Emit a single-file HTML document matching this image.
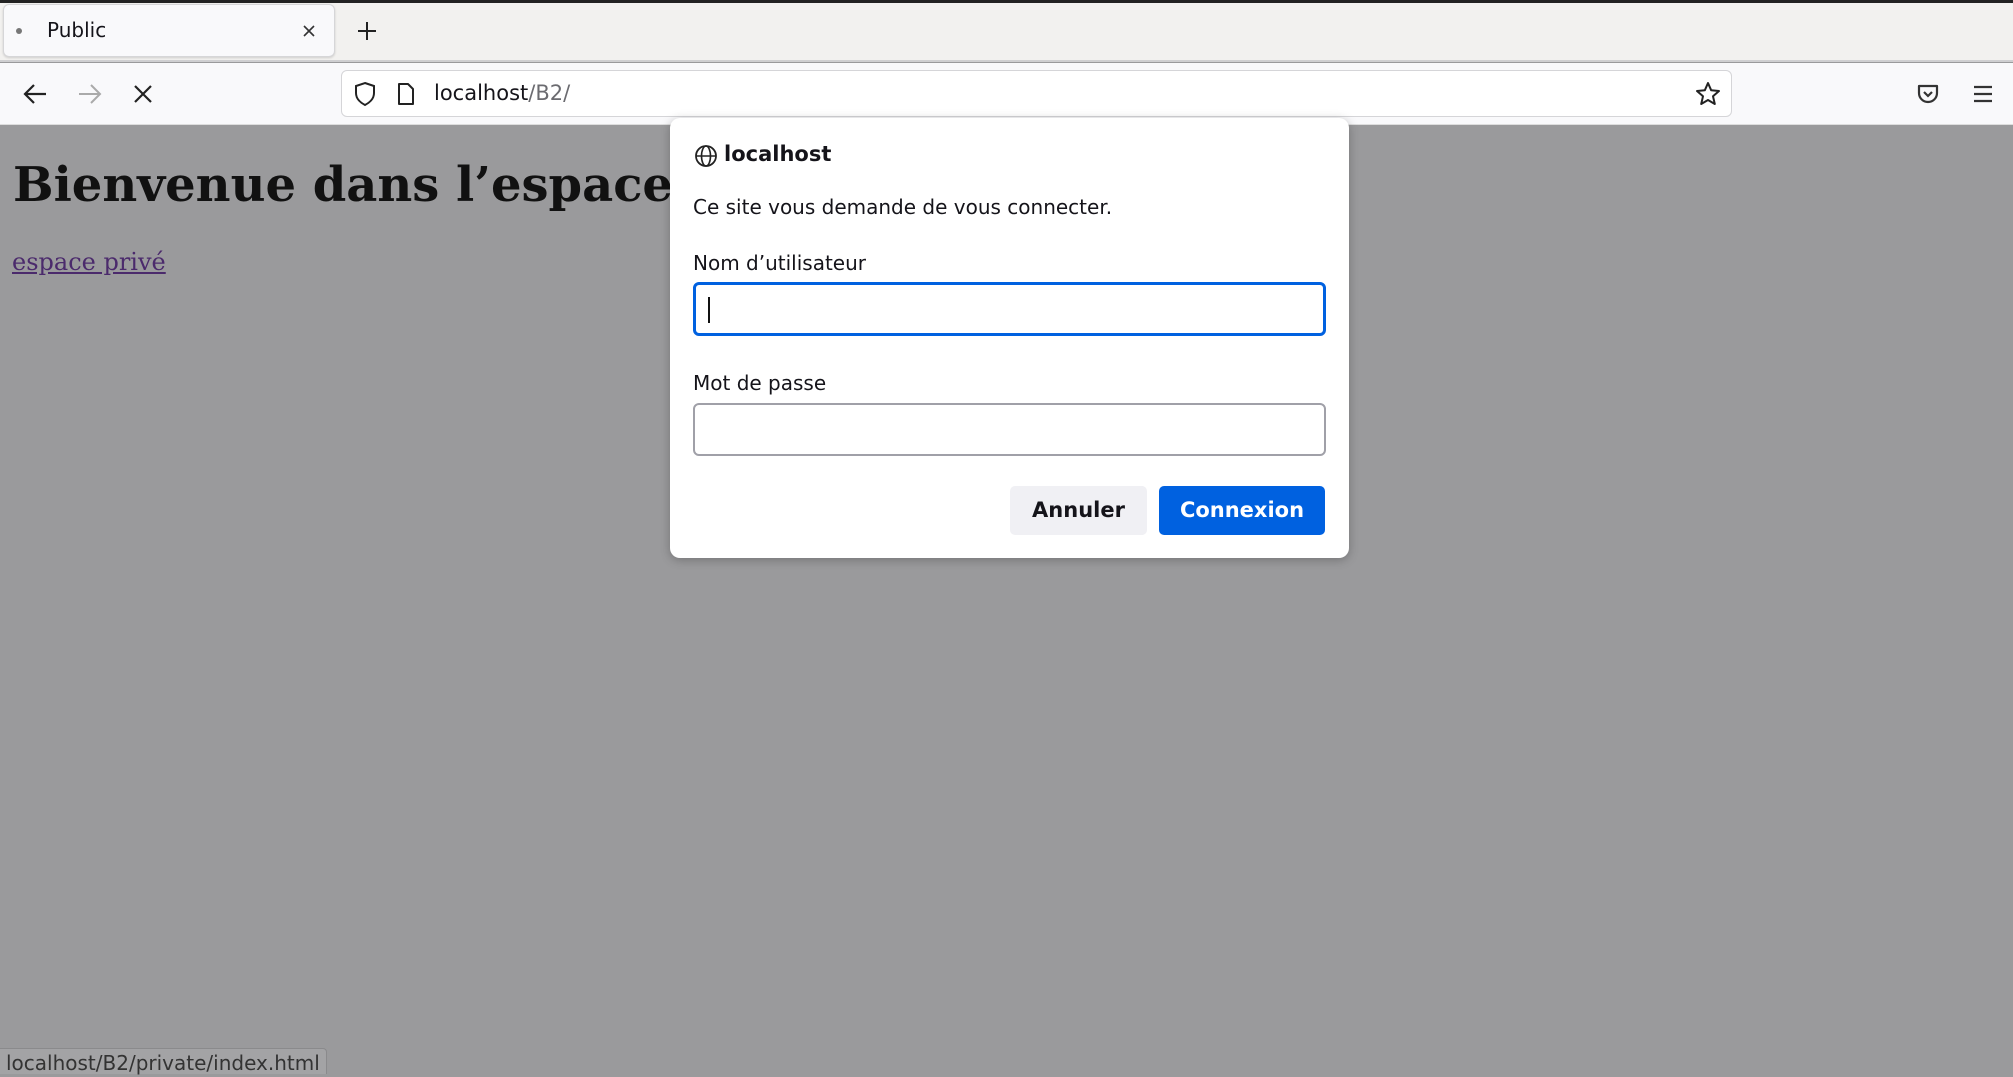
<!DOCTYPE html>
<html><head><meta charset="utf-8"><style>
*{margin:0;padding:0;box-sizing:border-box}
body{width:2013px;height:1074px;overflow:hidden;position:relative;background:#9a9a9c;font-family:"DejaVu Sans","Liberation Sans",sans-serif}
.abs{position:absolute}
#top{left:0;top:0;width:2013px;height:3px;background:#222}
#tabs{left:0;top:3px;width:2013px;height:59px;background:#f2f1ef;border-bottom:2px solid #cfcfd1}
#tab{left:3px;top:4px;width:332px;height:53px;background:#f9f9fb;border:1px solid #d6d6d8;border-radius:6px;box-shadow:0 1px 2px rgba(0,0,0,.15)}
#nav{left:0;top:63px;width:2013px;height:62px;background:#f9f9fb;border-bottom:1px solid #ddd}
#url{left:341px;top:70px;width:1391px;height:47px;background:#fff;border:1px solid #d5d5d8;border-radius:6px}
.t{white-space:nowrap}
#dlg{left:670px;top:118px;width:679px;height:440px;background:#fff;border-radius:10px;box-shadow:0 2px 10px rgba(0,0,0,.25)}
.inp{position:absolute;background:#fff;border-radius:6px}
.btn{position:absolute;border-radius:5px;font-weight:bold;font-size:21px;text-align:center;line-height:49px}
</style></head><body>
<div class="abs" id="top"></div>
<div class="abs" id="tabs"></div>
<div class="abs" id="tab"></div>
<div class="abs" style="left:16px;top:28px;width:6px;height:6px;border-radius:50%;background:#777"></div>
<div class="abs t" style="left:47px;top:18px;font-size:20px;color:#15141a">Public</div>
<svg class="abs" style="left:302px;top:24px" width="14" height="14" viewBox="0 0 14 14"><path d="M2 2L12 12M12 2L2 12" stroke="#333" stroke-width="1.6"/></svg>
<svg class="abs" style="left:356px;top:20px" width="22" height="22" viewBox="0 0 22 22"><path d="M11 2V20M2 11H20" stroke="#222" stroke-width="2"/></svg>
<div class="abs" id="nav"></div>
<svg class="abs" style="left:22px;top:82px" width="26" height="24" viewBox="0 0 26 24"><path d="M24 12H3M12 3L3 12L12 21" stroke="#222" stroke-width="2.2" fill="none"/></svg>
<svg class="abs" style="left:77px;top:82px" width="26" height="24" viewBox="0 0 26 24"><path d="M2 12H23M14 3L23 12L14 21" stroke="#aaa" stroke-width="2" fill="none"/></svg>
<svg class="abs" style="left:133px;top:84px" width="20" height="20" viewBox="0 0 20 20"><path d="M2 2L18 18M18 2L2 18" stroke="#222" stroke-width="2.2"/></svg>
<div class="abs" id="url"></div>
<svg class="abs" style="left:353px;top:81px" width="24" height="26" viewBox="0 0 24 26"><path d="M12 2L21 5V12C21 18 16 22 12 24C8 22 3 18 3 12V5Z" stroke="#222" stroke-width="2" fill="none"/></svg>
<svg class="abs" style="left:396px;top:82px" width="20" height="24" viewBox="0 0 20 24"><path d="M3 2H12L17 7V22H3Z" stroke="#222" stroke-width="2" fill="none" stroke-linejoin="round"/></svg>
<div class="abs t" style="left:434px;top:81px;font-size:21px;color:#15141a">localhost<span style="color:#6b6b70">/B2/</span></div>
<svg class="abs" style="left:1695px;top:81px" width="26" height="26" viewBox="0 0 26 26"><path d="M13 2L16.2 9.3L24 10L18 15.3L19.8 23L13 19L6.2 23L8 15.3L2 10L9.8 9.3Z" stroke="#222" stroke-width="2" fill="none" stroke-linejoin="round"/></svg>
<svg class="abs" style="left:1916px;top:83px" width="24" height="22" viewBox="0 0 24 22"><path d="M3 3H21V10C21 15 17 19 12 19C7 19 3 15 3 10Z" stroke="#333" stroke-width="2.2" fill="none" stroke-linejoin="round"/><path d="M8 9L12 13L16 9" stroke="#333" stroke-width="2.2" fill="none"/></svg>
<svg class="abs" style="left:1972px;top:84px" width="22" height="20" viewBox="0 0 22 20"><path d="M2 3H20M2 10H20M2 17H20" stroke="#333" stroke-width="2.2"/></svg>

<div class="abs t" style="left:13px;top:157px;font-family:'DejaVu Serif',serif;font-weight:bold;font-size:48px;color:#111">Bienvenue dans l’espace public</div>
<div class="abs t" style="left:12px;top:248px;font-family:'DejaVu Serif',serif;font-size:24px;color:#4b2a6c;text-decoration:underline">espace privé</div>

<div class="abs" id="dlg">
  <svg class="abs" style="left:24px;top:26px" width="24" height="24" viewBox="0 0 24 24"><circle cx="12" cy="12" r="10" stroke="#222" stroke-width="1.8" fill="none"/><ellipse cx="12" cy="12" rx="4.5" ry="10" stroke="#222" stroke-width="1.6" fill="none"/><path d="M2 12H22" stroke="#222" stroke-width="1.6"/></svg>
  <div class="abs t" style="left:54px;top:24px;font-size:21px;font-weight:bold;color:#15141a">localhost</div>
  <div class="abs t" style="left:23px;top:77px;font-size:20px;color:#15141a">Ce site vous demande de vous connecter.</div>
  <div class="abs t" style="left:23px;top:133px;font-size:20px;color:#15141a">Nom d’utilisateur</div>
  <div class="inp" style="left:23px;top:164px;width:633px;height:54px;border:3px solid #0061e0"></div>
  <div class="abs" style="left:38px;top:179px;width:2px;height:26px;background:#111"></div>
  <div class="abs t" style="left:23px;top:253px;font-size:20px;color:#15141a">Mot de passe</div>
  <div class="inp" style="left:23px;top:285px;width:633px;height:53px;border:2px solid #a0a0a8"></div>
  <div class="btn" style="left:340px;top:368px;width:137px;height:49px;background:#f0f0f4;color:#15141a">Annuler</div>
  <div class="btn" style="left:489px;top:368px;width:166px;height:49px;background:#0061e0;color:#fff">Connexion</div>
</div>

<div class="abs t" style="left:0;top:1048px;width:327px;height:26px;background:#a3a3a5;border:1px solid #8a8a8c;border-left:none;border-bottom:none;border-radius:0 4px 0 0;font-size:20px;color:#333;padding-left:6px;line-height:28px">localhost/B2/private/index.html</div>
</body></html>
